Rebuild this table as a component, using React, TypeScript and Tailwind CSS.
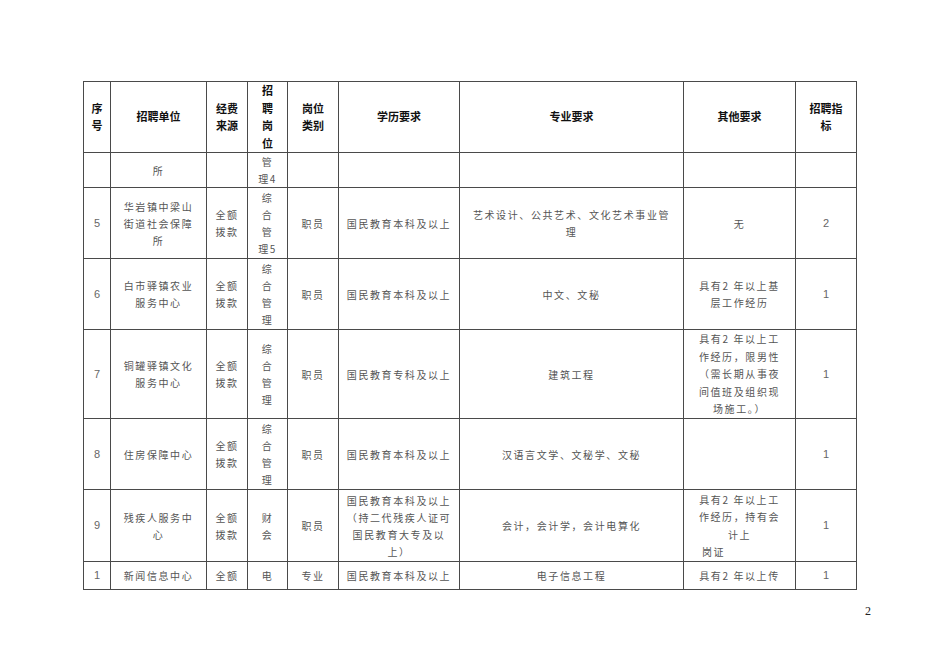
import React from "react";

type Cell = { lines: string[]; left?: string[] };
type Row = { h: string; cells: (string | Cell)[] };

const cols = ["w-[27px]", "w-[96px]", "w-[41px]", "w-[40px]", "w-[51px]", "w-[121px]", "w-[224px]", "w-[112px]", "w-[61px]"];

const head = [
  ["序", "号"],
  ["招聘单位"],
  ["经费", "来源"],
  ["招", "聘", "岗", "位"],
  ["岗位", "类别"],
  ["学历要求"],
  ["专业要求"],
  ["其他要求"],
  ["招聘指", "标"],
];

const rows: Row[] = [
  { h: "h-[35px]", cells: ["", "所", "", "管|理4", "", "", "", "", ""] },
  {
    h: "h-[71px]",
    cells: ["5", "华岩镇中梁山|街道社会保障|所", "全额|拨款", "综|合|管|理5", "职员", "国民教育本科及以上", "艺术设计、公共艺术、文化艺术事业管|理", "无", "2"],
  },
  {
    h: "h-[71px]",
    cells: ["6", "白市驿镇农业|服务中心", "全额|拨款", "综|合|管|理", "职员", "国民教育本科及以上", "中文、文秘", "具有2 年以上基|层工作经历", "1"],
  },
  {
    h: "h-[89px]",
    cells: [
      "7",
      "铜罐驿镇文化|服务中心",
      "全额|拨款",
      "综|合|管|理",
      "职员",
      "国民教育专科及以上",
      "建筑工程",
      "具有2 年以上工|作经历，限男性|（需长期从事夜|间值班及组织现|场施工。）",
      "1",
    ],
  },
  {
    h: "h-[71px]",
    cells: ["8", "住房保障中心", "全额|拨款", "综|合|管|理", "职员", "国民教育本科及以上", "汉语言文学、文秘学、文秘", "", "1"],
  },
  {
    h: "h-[72px]",
    cells: [
      "9",
      "残疾人服务中|心",
      "全额|拨款",
      "财|会",
      "职员",
      "国民教育本科及以上|（持二代残疾人证可|国民教育大专及以|上）",
      "会计，会计学，会计电算化",
      { lines: ["具有2 年以上工", "作经历，持有会", "计上"], left: ["岗证"] },
      "1",
    ],
  },
  {
    h: "h-[28px]",
    cells: ["1", "新闻信息中心", "全额", "电", "专业", "国民教育本科及以上", "电子信息工程", "具有2 年以上传", "1"],
  },
];

function BodyCell({ value, index }: { value: string | Cell; index: number }) {
  const numeric = index === 0 || index === 8;
  if (typeof value !== "string") {
    return (
      <td className="border border-[#4a4a4a] p-0 align-middle">
        <div className="text-center leading-[17.5px]">
          {value.lines.map((l, i) => (
            <div key={i}>{l}</div>
          ))}
        </div>
        {value.left?.map((l, i) => (
          <div key={i} className="pl-[18px] text-left leading-[17.5px]">
            {l}
          </div>
        ))}
      </td>
    );
  }
  const lines = value ? value.split("|") : [];
  return (
    <td
      className={
        "border border-[#4a4a4a] p-0 text-center align-middle " +
        (numeric ? "font-['Liberation_Sans',sans-serif] text-[11px] tracking-normal text-[#666]" : "")
      }
    >
      {lines.map((l, i) => (
        <div key={i} className={lines.length > 4 ? "leading-[17.4px]" : "leading-[17px]"}>
          {l}
        </div>
      ))}
    </td>
  );
}

export default function App() {
  return (
    <div className="min-h-[672px] w-[950px] bg-white pt-[81px] pl-[83px] font-['Noto_Sans_CJK_SC','Noto_Sans',sans-serif]">
      <table className="table-fixed border-collapse text-[10px] tracking-[1.6px] text-[#555]">
        <colgroup>
          {cols.map((c, i) => (
            <col key={i} className={c} />
          ))}
        </colgroup>
        <thead>
          <tr className="h-[71px]">
            {head.map((lines, i) => (
              <th
                key={i}
                className="border border-[#4a4a4a] p-0 text-center align-middle text-[11px] font-bold leading-[17.5px] tracking-normal text-[#111]"
              >
                {lines.map((l, j) => (
                  <div key={j}>{l}</div>
                ))}
              </th>
            ))}
          </tr>
        </thead>
        <tbody>
          {rows.map((r, ri) => (
            <tr key={ri} className={r.h}>
              {r.cells.map((c, ci) => (
                <BodyCell key={ci} value={c} index={ci} />
              ))}
            </tr>
          ))}
        </tbody>
      </table>
      <div className="w-[788px] pt-[12px] text-right font-['Liberation_Serif',serif] text-[12px] text-[#222]">2</div>
    </div>
  );
}
